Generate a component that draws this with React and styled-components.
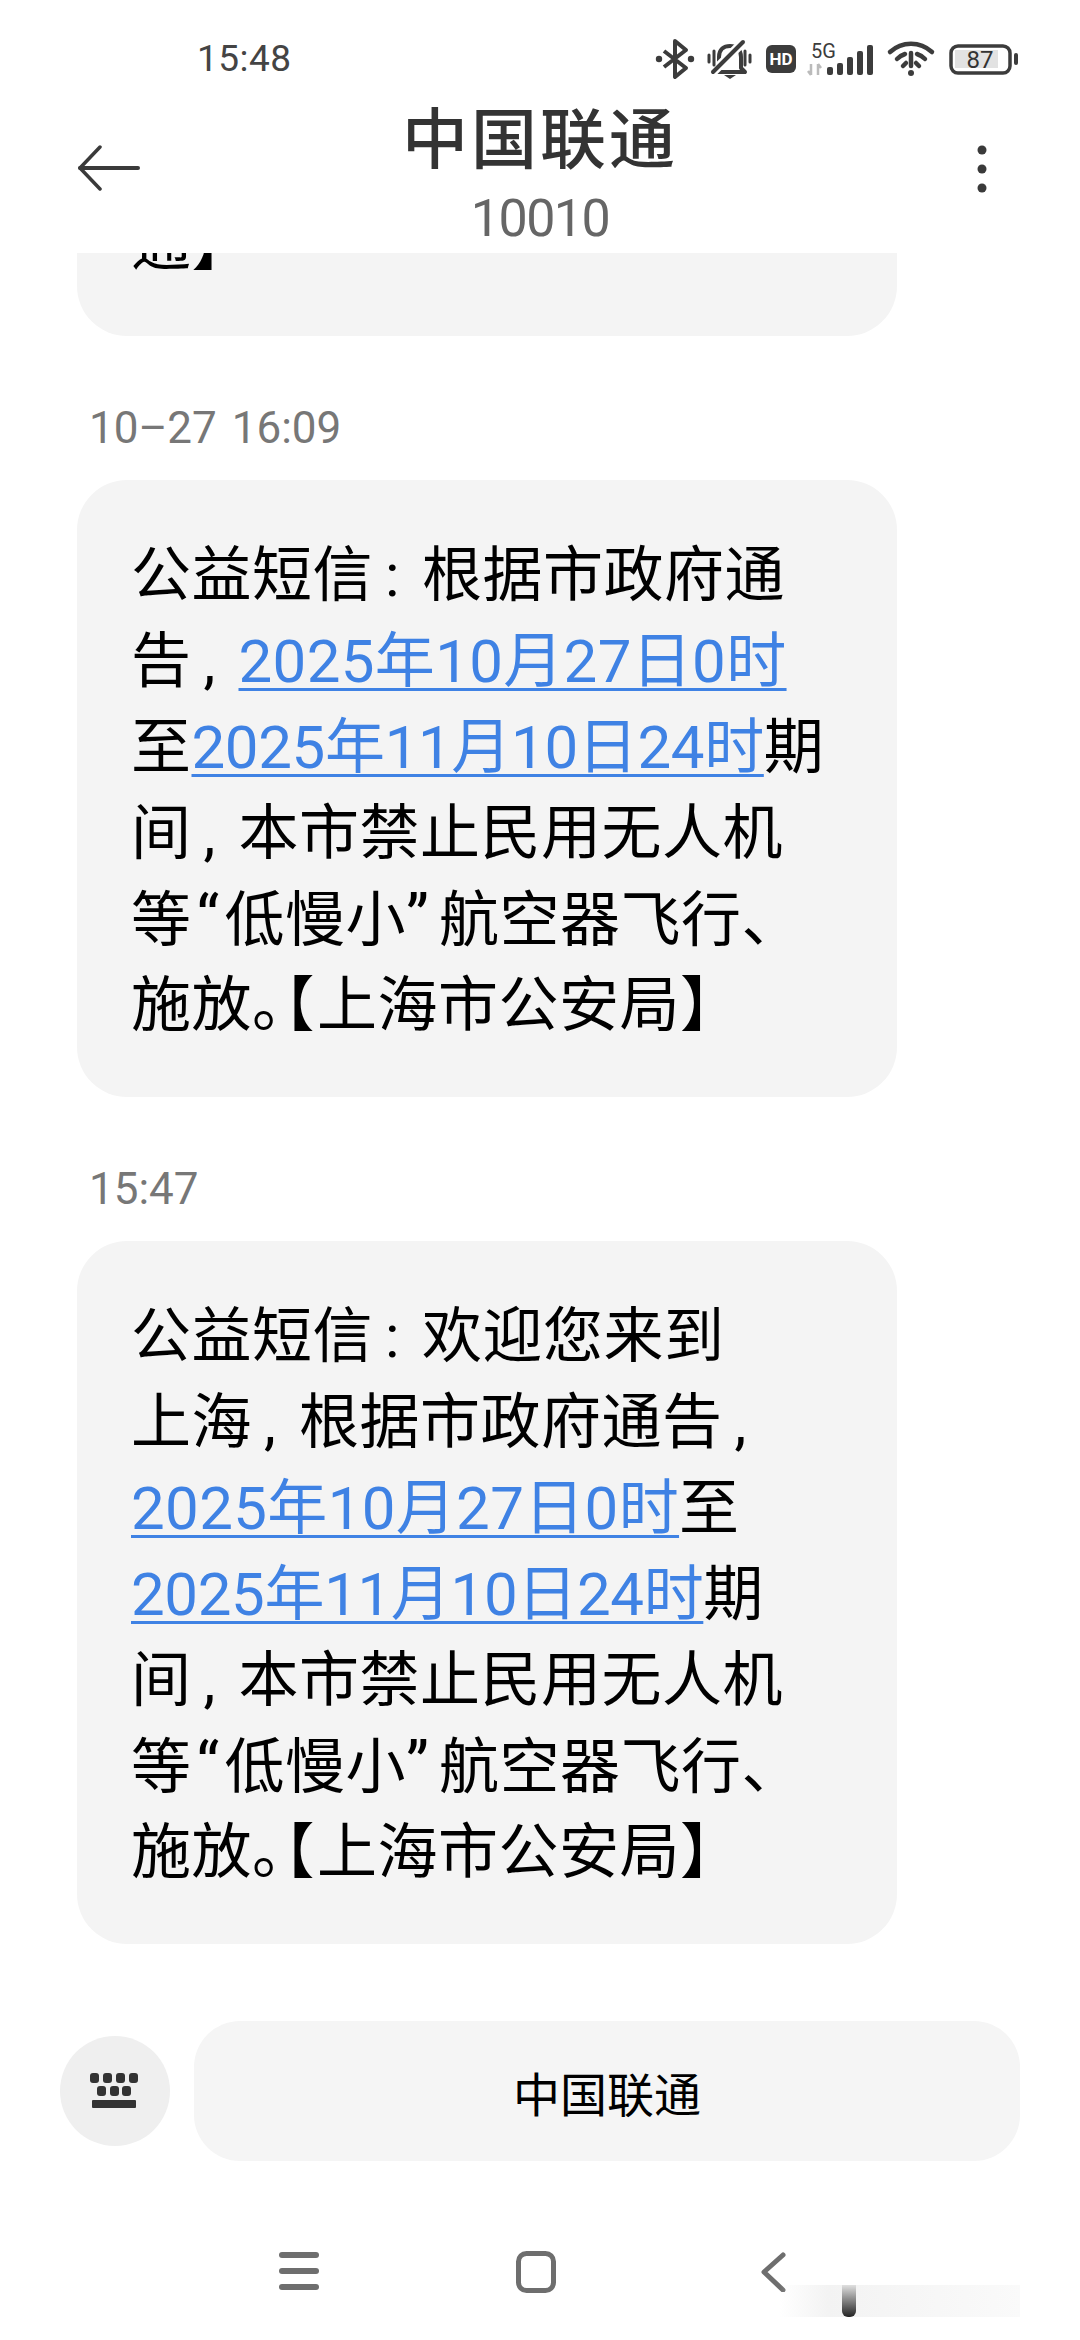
import React from 'react';
import styled, { createGlobalStyle } from 'styled-components';

const CJK = '"Roboto", "Noto Sans CJK SC", sans-serif';

const Global = createGlobalStyle`
  html, body {
    margin: 0;
    background: #fff;
  }
  * {
    box-sizing: border-box;
  }
`;

const Phone = styled.div`
  position: relative;
  width: 1080px;
  height: 2340px;
  background: #fff;
  display: flex;
  flex-direction: column;
  overflow: hidden;
  font-family: ${CJK};
`;

const StatusBar = styled.div`
  height: 84px;
  padding: 33px 62px 0 197px;
  display: flex;
  justify-content: space-between;
  align-items: flex-start;
`;

const Clock = styled.span`
  font-size: 37px;
  line-height: 52px;
  color: #444;
  letter-spacing: 0.5px;
`;

const StatusIcons = styled.svg`
  display: block;
  margin-top: 5px;
`;

const Header = styled.div`
  height: 169px;
  display: grid;
  grid-template-columns: 210px 1fr 210px;
`;

const HeaderIcon = styled.div`
  display: flex;
  align-items: flex-start;
  justify-content: ${(p) => (p.$end ? 'flex-end' : 'flex-start')};
  padding: ${(p) => (p.$end ? '61px 93px 0 0' : '61px 0 0 78px')};
`;

const Titles = styled.div`
  display: flex;
  flex-direction: column;
  align-items: center;
`;

const Title = styled.div`
  font-size: 66px;
  font-weight: 500;
  line-height: 90px;
  color: #333;
  letter-spacing: 3px;
  margin-top: 12px;
`;

const Subtitle = styled.div`
  font-size: 52px;
  line-height: 60px;
  color: #666;
  letter-spacing: -1.5px;
  margin-top: 3px;
`;

const Messages = styled.div`
  height: 1768px;
  overflow: hidden;
  display: flex;
  flex-direction: column;
  padding-left: 77px;
`;

const Clipped = styled.div`
  height: 83px;
  overflow: hidden;
  display: flex;
  flex-direction: column;
  justify-content: flex-end;
  flex-shrink: 0;
`;

const Stamp = styled.div`
  font-size: 44px;
  line-height: 60px;
  color: #777;
  margin: 62px 0 22px 12px;
  word-spacing: 4px;
`;

const Bubble = styled.div`
  width: 820px;
  flex-shrink: 0;
  background: #f4f4f4;
  border-radius: 50px;
  padding: 53px 54px 48px;
  color: #000;
  font-size: 60px;
  line-height: 86px;
  letter-spacing: 0.5px;
`;

const Line = styled.div`
  white-space: nowrap;
  height: 86px;
`;

const DateLink = styled.span`
  color: #3f82e4;
  letter-spacing: ${(p) => p.$track}px;
  text-decoration: underline;
  text-decoration-thickness: 3px;
  text-underline-offset: 6px;
`;

/* the phone sets ":" and "," in a wider slot than the Latin glyph */
const Sep = styled.span`
  display: inline-block;
  width: ${(p) => p.$w}px;
  padding-left: 12px;
`;

const Quote = styled.span`
  display: inline-block;
  width: 33px;
  font-size: 64px;
  text-align: ${(p) => (p.$close ? 'left' : 'center')};
`;

const Tight = styled.span`
  font-feature-settings: "halt";
  letter-spacing: 2.5px;
`;

const InputRow = styled.div`
  height: 140px;
  padding-left: 60px;
  display: flex;
  align-items: center;
  gap: 24px;
`;

const RoundButton = styled.div`
  width: 110px;
  height: 110px;
  border-radius: 50%;
  background: #efefef;
  display: flex;
  align-items: center;
  justify-content: center;
`;

const Pill = styled.div`
  width: 826px;
  height: 140px;
  border-radius: 46px;
  background: #f5f5f5;
  display: flex;
  align-items: center;
  justify-content: center;
  font-size: 47px;
  color: #000;
`;

const NavBar = styled.div`
  display: flex;
  align-items: center;
  margin-top: 90px;
  padding-left: 279px;
`;

const NavSlot = styled.div`
  width: ${(p) => p.$w}px;
  display: flex;
`;

const Watermark = styled.div`
  position: absolute;
  left: 780px;
  top: 2285px;
  width: 240px;
  height: 32px;
  background: linear-gradient(90deg, rgba(240, 240, 240, 0), rgba(240, 240, 240, 0.8) 20%, rgba(245, 245, 245, 0.5));
`;

const WatermarkBar = styled.div`
  position: absolute;
  left: 842px;
  top: 2285px;
  width: 14px;
  height: 32px;
  border-radius: 0 0 6px 6px;
  background: linear-gradient(180deg, #e0e0e0, #222);
`;

function StatusGlyphs() {
  const c = '#3c3c3c';
  return (
    <StatusIcons width="365" height="42" viewBox="0 0 365 42">
      {/* bluetooth */}
      <path d="M11 13 L33 30 L22 39 V3 L33 12 L11 29" fill="none" stroke={c} strokeWidth="4" strokeLinejoin="round" />
      <circle cx="6" cy="21" r="3.2" fill={c} />
      <circle cx="38" cy="21" r="3.2" fill={c} />
      {/* muted bell */}
      <path d="M66 30 V19 C66 11 71 8 77 8 C83 8 88 11 88 19 V30 L92 34 H62 Z" fill="none" stroke={c} strokeWidth="4" strokeLinejoin="round" />
      <path d="M58 36 L92 2" stroke="#fff" strokeWidth="9" />
      <path d="M60 34 L90 4" stroke={c} strokeWidth="4" strokeLinecap="round" />
      <path d="M56 17 V24 M61 13 V27 M97 17 V24 M92 13 V27" stroke={c} strokeWidth="3" strokeLinecap="round" />
      <path d="M71 37 H83 L77 41 Z" fill={c} />
      {/* HD */}
      <rect x="113" y="7" width="30" height="28" rx="6" fill={c} />
      <text x="128" y="27" textAnchor="middle" fontSize="17" fontWeight="700" fill="#fff" fontFamily="Roboto, sans-serif">HD</text>
      {/* 5G and signal */}
      <text x="158" y="20" fontSize="20" fill={c} fontFamily="Roboto, sans-serif">5G</text>
      <path d="M158 26 V37 M155 33 L158 37 M165 37 V26 M165 26 L168 30" stroke="#bbb" strokeWidth="2.5" fill="none" />
      <rect x="174" y="29" width="6" height="8" rx="2" fill={c} />
      <rect x="184" y="25" width="6" height="12" rx="2" fill={c} />
      <rect x="194" y="19" width="6" height="18" rx="2" fill={c} />
      <rect x="204" y="13" width="6" height="24" rx="2" fill={c} />
      <rect x="214" y="7" width="6" height="30" rx="2" fill={c} />
      {/* wifi with exclamation */}
      <path d="M237 14 C249 3 267 3 279 14" fill="none" stroke={c} strokeWidth="4.5" strokeLinecap="round" />
      <path d="M244 21 C247 18 249 17 252 16 M272 21 C269 18 267 17 264 16" fill="none" stroke={c} strokeWidth="4.5" strokeLinecap="round" />
      <path d="M250 28 L253 25 M266 28 L263 25" fill="none" stroke={c} strokeWidth="4.5" strokeLinecap="round" />
      <path d="M258 15 V28" stroke={c} strokeWidth="4.5" strokeLinecap="round" />
      <circle cx="258" cy="35" r="3" fill={c} />
      {/* battery */}
      <rect x="298" y="8" width="59" height="27" rx="7" fill="none" stroke={c} strokeWidth="3.5" />
      <rect x="302" y="12" width="43" height="18" fill="#e2e2e2" />
      <text x="327" y="30" textAnchor="middle" fontSize="24" fill="#333" fontFamily="Roboto, sans-serif">87</text>
      <rect x="361" y="15" width="4" height="12" rx="2" fill={c} />
    </StatusIcons>
  );
}

const renderPart = (part, key) => {
  if (typeof part === 'string') return <span key={key}>{part}</span>;
  if (part.kind === 'date') return <DateLink key={key} $track={part.track}>{part.text}</DateLink>;
  if (part.kind === 'sep') return <Sep key={key} $w={part.w}>{part.text}</Sep>;
  if (part.kind === 'quote') return <Quote key={key} $close={part.text === '”'}>{part.text}</Quote>;
  return <Tight key={key}>{part.text}</Tight>;
};

function Message({ lines }) {
  return (
    <Bubble>
      {lines.map((parts, i) => (
        <Line key={i}>{parts.map((part, j) => renderPart(part, j))}</Line>
      ))}
    </Bubble>
  );
}

const colon = { kind: 'sep', text: ':', w: 49 };
const comma = { kind: 'sep', text: ',', w: 47 };
const oct27 = { kind: 'date', text: '2025年10月27日0时', track: 0.35 };
const nov10 = { kind: 'date', text: '2025年11月10日24时', track: -0.35 };

const restrict = [
  ['间', comma, '本市禁止民用无人机'],
  ['等', { kind: 'quote', text: '“' }, '低慢小', { kind: 'quote', text: '”' }, '航空器飞行、'],
  ['施放', { kind: 'tight', text: '。【' }, '上海市公安局', { kind: 'tight', text: '】' }],
];

const first = [
  ['公益短信', colon, '根据市政府通'],
  ['告', comma, oct27],
  ['至', nov10, '期'],
  ...restrict,
];

const second = [
  ['公益短信', colon, '欢迎您来到'],
  ['上海', comma, '根据市政府通告', comma],
  [oct27, '至'],
  [nov10, '期'],
  ...restrict,
];

export default function App() {
  return (
    <Phone>
      <Global />
      <StatusBar>
        <Clock>15:48</Clock>
        <StatusGlyphs />
      </StatusBar>
      <Header>
        <HeaderIcon>
          <svg width="64" height="46" viewBox="0 0 64 46" fill="none" stroke="#3a3a3a" strokeWidth="4" strokeLinecap="round" strokeLinejoin="round">
            <path d="M2 23 H60" />
            <path d="M22 2 L2 23 L22 44" strokeWidth="3.5" />
          </svg>
        </HeaderIcon>
        <Titles>
          <Title>中国联通</Title>
          <Subtitle>10010</Subtitle>
        </Titles>
        <HeaderIcon $end>
          <svg width="10" height="48" viewBox="0 0 10 48" fill="#3a3a3a">
            <circle cx="5" cy="5" r="4.5" />
            <circle cx="5" cy="24" r="4.5" />
            <circle cx="5" cy="43" r="4.5" />
          </svg>
        </HeaderIcon>
      </Header>
      <Messages>
        <Clipped>
          <Bubble>
            <Line>通<Tight>】</Tight></Line>
          </Bubble>
        </Clipped>
        <Stamp>10–27 16:09</Stamp>
        <Message lines={first} />
        <Stamp>15:47</Stamp>
        <Message lines={second} />
      </Messages>
      <InputRow>
        <RoundButton>
          <svg width="50" height="36" viewBox="0 0 50 36" fill="#333">
            <rect x="0" y="0" width="9" height="10" rx="3" />
            <rect x="13" y="0" width="9" height="10" rx="3" />
            <rect x="26" y="0" width="9" height="10" rx="3" />
            <rect x="39" y="0" width="9" height="10" rx="3" />
            <rect x="7" y="13" width="9" height="10" rx="3" />
            <rect x="20" y="13" width="9" height="10" rx="3" />
            <rect x="32" y="13" width="9" height="10" rx="3" />
            <rect x="2" y="27" width="44" height="8" rx="1" />
          </svg>
        </RoundButton>
        <Pill>中国联通</Pill>
      </InputRow>
      <NavBar>
        <NavSlot $w={237}>
          <svg width="40" height="40" viewBox="0 0 40 40" fill="#6e6e6e">
            <rect x="0" y="0" width="40" height="6" rx="3" />
            <rect x="0" y="16" width="40" height="6" rx="3" />
            <rect x="0" y="32" width="40" height="6" rx="3" />
          </svg>
        </NavSlot>
        <NavSlot $w={244}>
          <svg width="40" height="42" viewBox="0 0 40 42" fill="none" stroke="#6e6e6e" strokeWidth="5">
            <rect x="2.5" y="2.5" width="35" height="37" rx="8" />
          </svg>
        </NavSlot>
        <NavSlot $w={30}>
          <svg width="26" height="40" viewBox="0 0 26 40" fill="none" stroke="#6e6e6e" strokeWidth="5" strokeLinecap="round" strokeLinejoin="round">
            <path d="M23 3 L4 20 L23 38" />
          </svg>
        </NavSlot>
      </NavBar>
      <Watermark />
      <WatermarkBar />
    </Phone>
  );
}
